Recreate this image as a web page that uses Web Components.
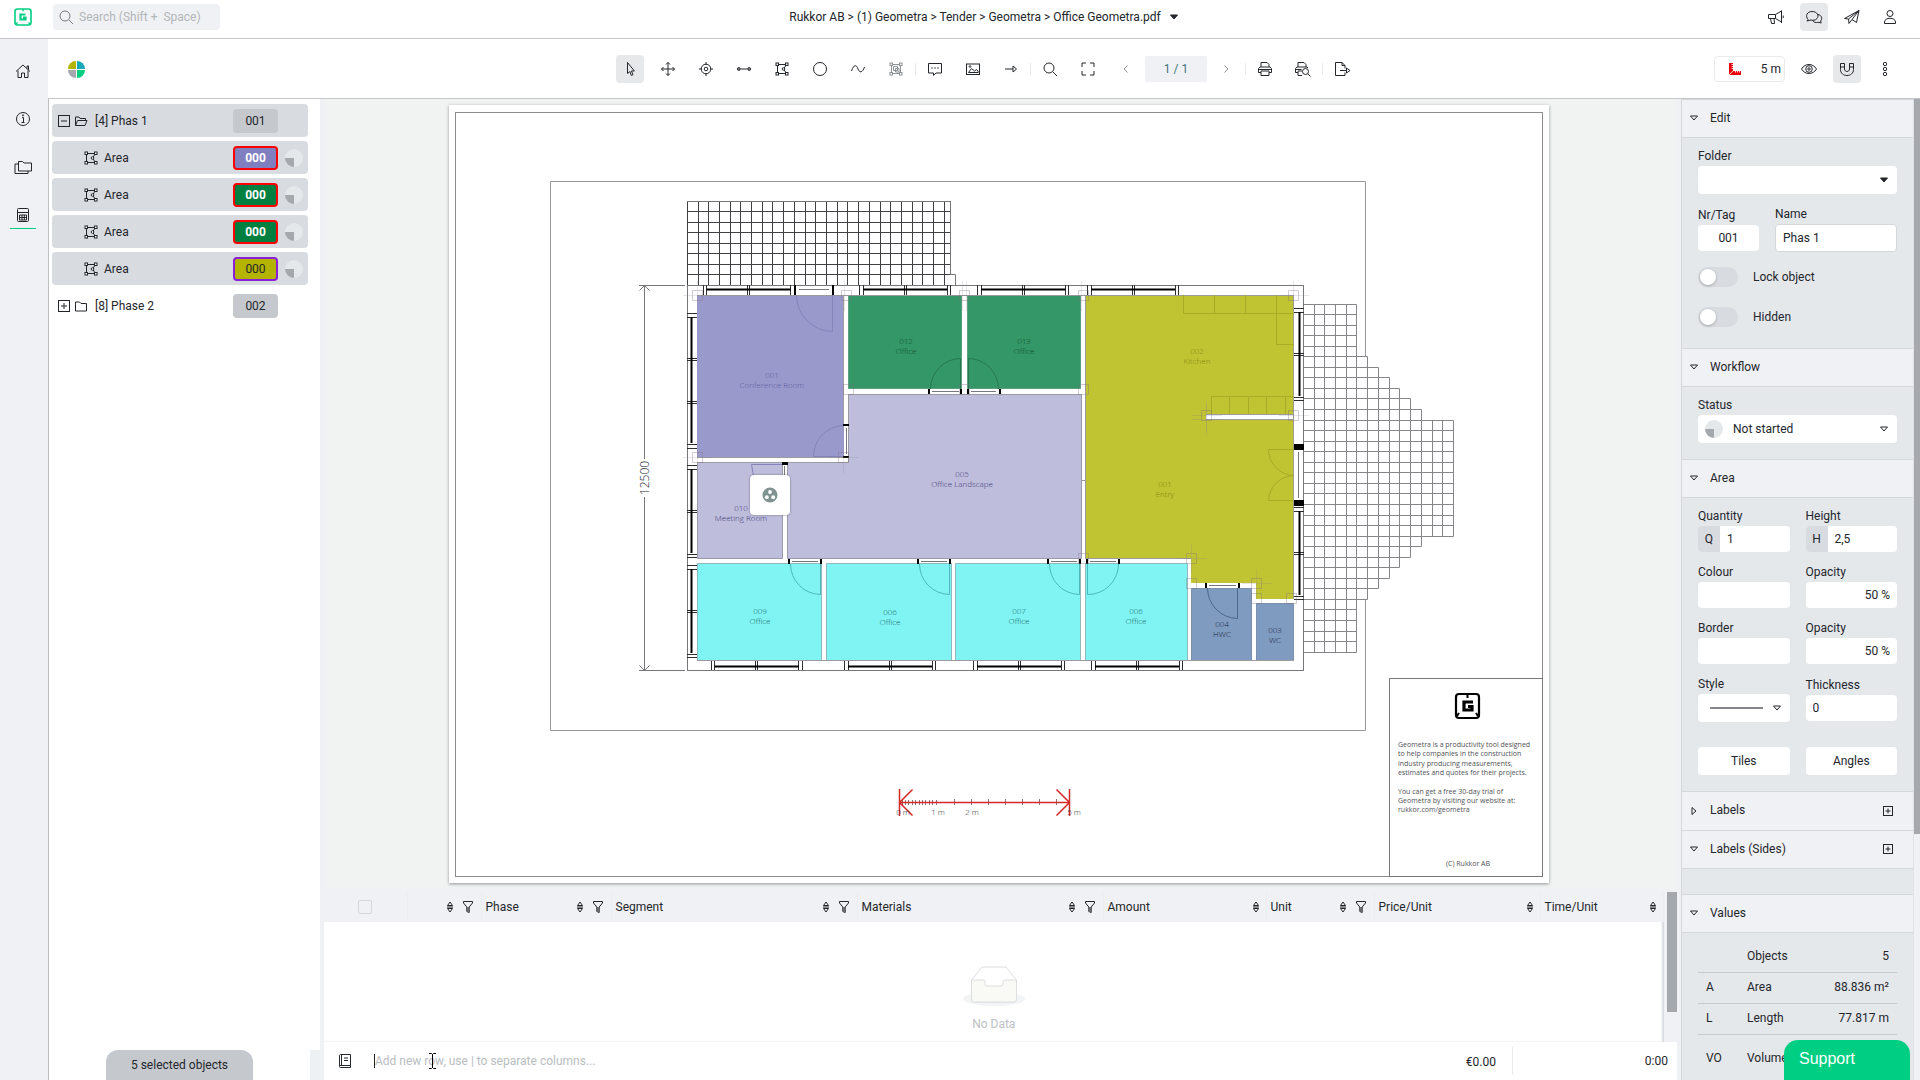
<!DOCTYPE html>
<html lang="en">
<head>
<meta charset="utf-8">
<title>Office Geometra.pdf</title>
<style>
  html, body { margin: 0; height: 100%; }
  body { font: 12px/16px Roboto, "Liberation Sans", sans-serif; color: #23262b; background: #f0f1f4; overflow: hidden; }
</style>
</head>
<body>
<geo-app></geo-app>
<script>
const BASE = `*{box-sizing:border-box}button,input,select{font:inherit;color:inherit;margin:0;border:0;padding:0;background:none;outline:0}button{cursor:pointer}`;
function define(name, css, html, after) {
  customElements.define(name, class extends HTMLElement {
    connectedCallback() {
      if (this.shadowRoot) return;
      const root = this.attachShadow({ mode: 'open' });
      root.innerHTML = `<style>${BASE}${css}</style>${typeof html === 'function' ? html(this) : html}`;
      if (after) after(this, root);
    }
  });
}

const AREA = '<path d="M4.5 4.5h9M4.500 13.500h9M4.500 4.500v9M13.500 4.500l-3 4.500 3 4.500"/><rect x="3" y="3" width="2.500" height="2.500" class="w"/><rect x="12.500" y="3" width="2.500" height="2.500" class="w"/><rect x="3" y="12.500" width="2.500" height="2.500" class="w"/><rect x="12.500" y="12.500" width="2.500" height="2.500" class="w"/><circle cx="10.500" cy="9" r="1.300" class="w"/>';
const ICONS = {
  home: '<path d="M2 9.500L9 3l7 6.500M13 6.500V4h1.500v4M4 8.500V15.500h3.500V11h3v4.500H14V8.500"/>',
  info: '<circle cx="9" cy="9" r="6.500"/><path d="M8 7.500h1.500v5M7.500 12.500h3"/><circle cx="9" cy="5.300" r=".6"/>',
  folders: '<path d="M4.500 3.500h4l1.500 1.500h7.500v8h-13zM4.500 6H1v9.500h13V13"/>',
  calc: '<rect x="3.500" y="2.500" width="11" height="13" rx="1"/><path d="M3.500 6.500h11M5.500 9h7v5h-7zM5.500 11.500h7M8 9v5M10.300 9v5"/>',
  search: '<circle cx="8" cy="8" r="5"/><path d="M11.700 11.700L16 16"/>',
  horn: '<path d="M1.500 6.500h7l6-3.500v11l-6-3.500h-7zM3.500 10.500l1 5h3l-.5-5M8.500 6.500v4M14.500 2.500v12.500M16.200 7.500v2.500"/>',
  chat: '<path d="M3 11.500C0 8 2 3.500 7 3.500s7.500 4 5 7c-1.500 2-4.500 2-6 1.500L2 13z"/><path d="M12.800 6.500c4 .5 5 4.500 2.700 6.500l.7 2-3-.7c-2.500.7-4.700 0-5.700-2"/>',
  send: '<path d="M1.500 10.500L16 2.500l-2.500 12-4.500-3-3 4-.5-4.500zM5.500 11L16 2.500 9 11.500"/>',
  user: '<circle cx="9" cy="5.500" r="3"/><path d="M3.500 15.500v-1.500c0-5 11-5 11 0v1.500z"/>',
  cursor: '<path d="M6.500 2.500v11l2.300-2 1.500 4 1.700-.8-1.600-3.700h3z"/>',
  move: '<path d="M9 2.500v13M2.500 9h13M7 4.500l2-2 2 2M7 13.500l2 2 2-2M4.500 7l-2 2 2 2M13.500 7l2 2-2 2"/>',
  target: '<circle cx="9" cy="9" r="4.800"/><circle cx="9" cy="9" r="1.800"/><path d="M9 2v3M9 13v3M2 9h3M13 9h3"/>',
  length: '<path d="M5.500 9h7"/><path d="M4 7.500v3M14 7.500v3"/><circle cx="3.800" cy="9" r="1.400"/><circle cx="14.200" cy="9" r="1.400"/>',
  area: AREA,
  circle: '<circle cx="9" cy="9" r="6.500"/>',
  curve: '<path d="M2.500 11C5 3.500 7.500 5 9 9s4.500 4 6.500-2"/>',
  group: AREA.replace('M13.500 4.500l-3 4.500 3 4.500', 'M13.500 4.500v9M6.500 6.500h4v4h-4zM8.500 8.500h3.500v3.500h-3.500z').replace(/<circle.*/, ''),
  comment: '<path d="M2.500 3.500h13v9.500h-5.500l-2.500 2.500V13h-5z"/><path d="M5.500 8h1M8.500 8h1M11.500 8h1" stroke-width="1.400"/>',
  image: '<rect x="2.500" y="4" width="13" height="10.500"/><path d="M4.500 12.500l3-4 3 2.500 2-1.500 2 2.500M4.500 12.500h10"/><circle cx="6" cy="6.500" r=".8"/>',
  arrow: '<path d="M3 9h8M11 6l3.500 3-3.500 3z"/>',
  full: '<path d="M3 7V3h4M11 3h4v4M15 11v4h-4M7 15H3v-4"/>',
  prev: '<path d="M10.500 5.500L7 9l3.500 3.500"/>',
  next: '<path d="M7.500 5.500L11 9l-3.500 3.500"/>',
  print: '<path d="M5 7V2.500h6l2 2V7M5 12.500H2.500v-4L4 7h10l1.500 1.500v4H13M5 11h8v4.500H5zM2.500 9.500h13"/>',
  preview: '<path d="M4 7V2.500h6l2 2V7M4 12.500H1.500v-4L3 7h10l1 1M8 15.500H4V11h4"/><circle cx="11.500" cy="11.500" r="3"/><path d="M13.700 13.700l2.800 2.800M1.500 9.500h6"/>',
  exportdoc: '<path d="M12 12.500v3H2.500v-13h6.500l3 3v3M9 2.500v3h3M7 10.500h7M13.500 8l3.500 2.500-3.500 2.500z"/>',
  eye: '<path d="M1.500 9c3.500-6 11.500-6 15 0-3.500 6-11.500 6-15 0z"/><circle cx="9" cy="9" r="3.300"/><circle cx="9" cy="9" r="1.200"/>',
  magnet: '<path d="M2.500 3.500h4V9c0 3.300 5 3.300 5 0V3.500h4V9.500c0 8-13 8-13 0zM2.500 7h4M11.500 7h4"/>',
  dots: '<circle cx="9" cy="4" r="1.700"/><circle cx="9" cy="9" r="1.700"/><circle cx="9" cy="14" r="1.700"/>',
  minus: '<rect x="3.500" y="3.500" width="11" height="11"/><path d="M6 9h6"/>',
  plus: '<rect x="3.500" y="3.500" width="11" height="11"/><path d="M6 9h6M9 6v6"/>',
  add: '<rect x="4.500" y="4.500" width="9" height="9"/><path d="M6.500 9h5M9 6.500v5"/>',
  folder: '<path d="M2.500 5h4l1.500 1.500h5.500v7.500h-11z"/>',
  open: '<path d="M2.500 13.500V5h3.500l1 1.500h5.500v2M2.500 13.500l2-5h9.500l-2 5z"/>',
  sort: '<path d="M9 4l2.500 3.500h-5zM9 14l2.500-3.500h-5zM6 9h6"/>',
  filter: '<path d="M4.500 3.500h9v1.500l-3.300 4v5.500l-2.400-1V9L4.500 5z"/><path d="M8.500 9v4M9.500 9v4.500" opacity=".5"/>',
  down: '<path d="M5.500 7h7L9 11z"/>',
  right: '<path d="M7 5.500l4 3.500-4 3.500z"/>',
  caret: '<path d="M5.500 7h7L9 11z" fill="currentColor"/>',
  book: '<path d="M3.500 3.500v11c0 .8.500 1 1 1h10V2.500h-10c-.6 0-1 .3-1 1M3.500 13.500h11M5.500 2.500v11M8 6h4M8 8.500h4"/>',
  ruler: '<path d="M3 3h4v8h8v4H3z" fill="#e8000d" stroke="none"/><path d="M7 4.500H5.500M7 6.500H5.500M7 8.500H5.500M9.500 11v1.500M11.500 11v1.500M13.500 11v1.500M3 15l4-4" stroke="#fff" stroke-width=".8"/>',
};
define('geo-icon', `:host{display:inline-block;width:18px;height:18px;flex:none}svg{display:block;width:100%;height:100%;fill:none;stroke:currentColor;stroke-width:1;overflow:visible}.w{fill:#fff}`,
  el => `<svg viewBox="0 0 18 18" aria-hidden="true">${ICONS[el.getAttribute('name')]}</svg>`);

define('geo-mark', `:host{display:block;width:18px;height:18px;flex:none;color:#00cf83}svg{display:block;width:100%;height:100%}`,
  `<svg viewBox="0 0 18 18" fill="none" stroke="currentColor"><rect x="1" y="1" width="16" height="16" rx="2.500" stroke-width="1.600"/><path d="M11.500 6.500H6.500v5h5V9.500H9" stroke-width="2.200"/><path d="M9 1v2.200M3.500 14.500l-1.500 1.500M14.500 14.500l1.500 1.500" stroke-width="1.400"/></svg>`);

define('geo-pie', `:host{display:block;width:18px;height:18px;flex:none;--c:#a5a9ae}div{height:100%;border-radius:50%;background:conic-gradient(#e5e8eb 50%,var(--c) 0 75%,#e5e8eb 0)}`, `<div></div>`);

define('geo-button', `:host{display:block;flex:none}button{display:grid;place-items:center;width:28px;height:28px;border-radius:4px}:host([active]) button{background:#e6e8ea}:host([muted]) button{color:#8d9095}`,
  el => `<button type="button" aria-label="${el.getAttribute('icon')}"><geo-icon name="${el.getAttribute('icon')}"></geo-icon></button>`);

define('geo-header', `:host{display:flex;align-items:center;height:39px;background:#fff;border-bottom:1px solid #c4c5c9;padding:0 16px 4px 14px}
  .search{display:flex;align-items:center;gap:4px;margin-left:21px;width:167px;height:26px;border-radius:4px;background:#f0f1f4;padding:0 5px 1px 4px;color:#777a7f}
  input{flex:1;min-width:0}input::placeholder{color:#b3b6b9;opacity:1}
  .path{flex:1;display:flex;justify-content:center;padding-right:10px}.path button{display:flex;align-items:center;gap:4px}
  nav{display:flex;gap:10px}`,
  `<geo-mark></geo-mark>
  <label class="search"><geo-icon name="search"></geo-icon><input type="search" aria-label="Search" placeholder="Search (Shift +  Space)"></label>
  <div class="path"><button type="button">Rukkor AB &gt; (1) Geometra &gt; Tender &gt; Geometra &gt; Office Geometra.pdf<geo-icon name="caret"></geo-icon></button></div>
  <nav><geo-button icon="horn"></geo-button><geo-button icon="chat" active></geo-button><geo-button icon="send"></geo-button><geo-button icon="user"></geo-button></nav>`);

define('geo-rail', `:host{display:flex;flex-direction:column;align-items:center;width:48px;background:#f0f1f4;padding:18px 2px 0 0;gap:20px}
  a{display:grid;place-items:center;width:26px;height:28px;color:inherit;border-bottom:1px solid transparent}a.on{border-color:#00cf83}`,
  `<a href="#home" aria-label="Home"><geo-icon name="home"></geo-icon></a><a href="#info" aria-label="Info"><geo-icon name="info"></geo-icon></a><a href="#files" aria-label="Files"><geo-icon name="folders"></geo-icon></a><a href="#calc" class="on" aria-label="Calculation"><geo-icon name="calc"></geo-icon></a>`);

const btns = s => s.split(' ').map(n => `<geo-button icon="${n.replace(/[*~]/, '')}"${n.includes('*') ? ' active' : ''}${n.includes('~') ? ' muted' : ''}></geo-button>`).join('');
define('geo-toolbar', `:host{display:grid;grid-template-columns:1fr auto 1fr;align-items:center;height:60px;background:#fff;border-bottom:1px solid #c4c5c9;padding:1px 16px 0 20px}
  .mid{display:flex;gap:5px;align-items:center}.g{display:flex;gap:10px}.pg{display:flex;gap:5px;align-items:center}hr{width:1px;height:12px;margin:0;border:0;background:#e6e8ea}
  .page{width:62px;height:26px;background:#f0f1f4;border-radius:2px;text-align:center;color:#43757a}
  .end{display:flex;gap:10px;justify-content:flex-end;align-items:center;padding-right:5px}
  .scale{display:flex;align-items:center;justify-content:space-between;width:71px;height:26px;border:1px solid #e8eaec;border-radius:4px;padding:0 3px 0 11px}
  .pie{display:block;width:17px;height:17px}`,
  `<svg class="pie" viewBox="0 0 18 18"><path d="M8.500 8.500H0A8.500 8.500 0 0 1 8.500 0z" fill="#b4b400"/><path d="M9.500 8.500V0A8.500 8.500 0 0 1 18 8.500z" fill="#18a9b8"/><path d="M8.500 9.500V18A8.500 8.500 0 0 1 0 9.500z" fill="#a5a9ae"/><path d="M9.500 9.500H18A8.500 8.500 0 0 1 9.500 18z" fill="#00cf83"/></svg>
  <div class="mid"><div class="g">${btns('cursor* move target length area circle curve group~')}</div><hr>
  <div class="g">${btns('comment image arrow')}</div><hr>
  <div class="g">${btns('search full')}<div class="pg">${btns('prev~')}<input class="page" aria-label="Page" value="1 / 1">${btns('next~')}</div></div><hr>
  <div class="g">${btns('print preview')}</div><hr><div class="g">${btns('exportdoc')}</div></div>
  <div class="end"><button type="button" class="scale"><geo-icon name="ruler"></geo-icon>5 m</button>${btns('eye magnet* dots')}</div>`);

define('geo-tree-row', `:host{display:flex;align-items:center;height:33px;border-radius:4px;padding:1px 5px 0 3px}
  :host([selected]){background:#d8dbe0}.name{flex:1;padding-left:4px}:host([child]){padding-left:30px}
  .tag{width:45px;height:24px;margin-right:7px;border-radius:4px;background:var(--fill,#c5c9cd);border:2px solid var(--line,transparent);background-clip:border-box;text-align:center;line-height:20px;color:var(--ink,inherit);font-weight:var(--weight,400)}
  .end{width:18px}button{display:grid}`,
  el => {
    const child = el.hasAttribute('child');
    return `${child ? '<geo-icon name="area"></geo-icon>' : `<button type="button" aria-label="Toggle"><geo-icon name="${el.getAttribute('toggle')}"></geo-icon></button><geo-icon name="${el.getAttribute('toggle') === 'minus' ? 'open' : 'folder'}"></geo-icon>`}
    <span class="name"><slot></slot></span><span class="tag">${el.getAttribute('tag')}</span><span class="end">${child ? '<geo-pie></geo-pie>' : ''}</span>`;
  });

define('geo-tree', `:host{display:flex;flex-direction:column;width:272px;background:#fff;border-left:1px solid #bdbfc3}
  .rows{flex:1;display:flex;flex-direction:column;gap:4px;padding:5px 12px 0 3px}
  geo-tree-row{flex:none}
  .violet{--fill:#8080c0;--line:#f00;--ink:#fff;--weight:700}.green{--fill:#008040;--line:#f00;--ink:#fff;--weight:700}.olive{--fill:#b4b400;--line:#8a1fd8}
  footer{display:flex;justify-content:center;height:30px;border-right:10px solid #eef1f4}
  footer span{width:147px;border-radius:12px 12px 0 0;background:#c5c9cd;text-align:center;line-height:30px}`,
  `<div class="rows"><geo-tree-row selected toggle="minus" tag="001">[4] Phas 1</geo-tree-row>
  <geo-tree-row selected child class="violet" tag="000">Area</geo-tree-row><geo-tree-row selected child class="green" tag="000">Area</geo-tree-row>
  <geo-tree-row selected child class="green" tag="000">Area</geo-tree-row><geo-tree-row selected child class="olive" tag="000">Area</geo-tree-row>
  <geo-tree-row toggle="plus" tag="002">[8] Phase 2</geo-tree-row></div><footer><span>5 selected objects</span></footer>`);

/* Floor plan drawing, in sheet units */
function plan() {
  const line = (x1, y1, x2, y2) => `M${x1} ${y1}L${x2} ${y2}`;
  const rect = (x, y, x2, y2, f, s = 'none') => `<rect x="${x}" y="${y}" width="${x2 - x}" height="${y2 - y}" fill="${f}" stroke="${s}"/>`;
  const path = (d, s, w = 1) => `<path d="${d}" stroke="${s}" stroke-width="${w}"/>`;
  const snap = v => Math.floor(v) + .5;
  let g1 = '', g2 = '', win = '', bars = '', posts = '', thin = '';
  for (let i = 0; i < 25; i++) g1 += line(snap(687.3 + i * 10.71), 201, snap(687.3 + i * 10.71), 285);
  for (let j = 0; j < 8; j++) g1 += line(687, snap(201 + j * 10.55), 951, snap(201 + j * 10.55));
  const reach = [];
  for (let j = 0; j < 33; j++) reach.push(j < 5 ? 5 : j < 11 ? j + 1 : j < 22 ? 14 : j < 28 ? 33 - j : 5);
  const gx = k => snap(1303.3 + 10.73 * k), gy = j => snap(304 + 10.55 * j);
  for (let j = 0; j <= 33; j++) g2 += line(1303, gy(j), gx(Math.max(reach[j] || 0, reach[j - 1] || 0)), gy(j));
  for (let k = 1; k <= 14; k++) { const a = reach.findIndex(r => r >= k), b = 33 - [...reach].reverse().findIndex(r => r >= k); g2 += line(gx(k), gy(a), gx(k), gy(b)); }
  const hw = (x, y1, y2, yc, n = 2) => { bars += line(x, yc, x + 42 * n, yc); [-3.5, 0].forEach(o => win += line(snap(x + o), y1, snap(x + o), y2)); for (let i = 1; i < n; i++) [-1, 1].forEach(o => win += line(snap(x + 42 * i) + o, y1, snap(x + 42 * i) + o, y2)); [0, 3.5].forEach(o => win += line(snap(x + 42 * n + o), y1, snap(x + 42 * n + o), y2)); };
  const vw = (y, x1, x2, xc, n = 2) => { bars += line(xc, y, xc, y + 42 * n); [-3.5, 0].forEach(o => win += line(x1, snap(y + o), x2, snap(y + o))); for (let i = 1; i < n; i++) [-1, 1].forEach(o => win += line(x1, snap(y + 42.5 * i) + o, x2, snap(y + 42.5 * i) + o)); [0, 3.5].forEach(o => win += line(x1, snap(y + 42.5 * n + o), x2, snap(y + 42.5 * n + o))); };
  [706.7, 863.3, 981.3, 1091].forEach(x => hw(x, 285, 295, 289.5));
  [714.7, 848, 977, 1095].forEach(x => hw(x, 661, 670, 666.5));
  vw(317, 687, 697, 691.5, 3); [469, 569].forEach(y => vw(y, 687, 697, 691.5)); [312, 511].forEach(y => vw(y, 1294, 1304, 1299.5));
  [[794, 285, 2, 10], [832, 285, 2, 10], [843, 424, 6, 2], [843, 456, 6, 2], [928, 389, 2, 5], [960, 389, 2, 5], [967, 389, 2, 5], [999, 389, 2, 5], [782, 462, 6, 3],
   [788, 559, 2, 5], [820, 559, 2, 5], [917, 559, 2, 5], [949, 559, 2, 5], [1047, 559, 2, 5], [1079, 559, 2, 5], [1086, 559, 2, 5], [1118, 559, 2, 5], [1205, 583, 2, 5], [1238, 583, 2, 5], [1294, 444, 10, 6], [1294, 500, 10, 6]]
    .forEach(([x, y, w, h]) => posts += `<rect x="${x}" y="${y}" width="${w}" height="${h}"/>`);
  [[799, 289.5, 829, 289.5], [846.5, 428, 846.5, 454], [932, 391.5, 959, 391.5], [971, 391.5, 996, 391.5], [792, 561.5, 818, 561.5], [921, 561.5, 947, 561.5], [1051, 561.5, 1077, 561.5], [1090, 561.5, 1116, 561.5], [1209, 585.5, 1236, 585.5], [1298.5, 452, 1298.5, 498], [784.5, 466, 784.5, 476]].forEach(a => thin += line(...a));
  let marks = '';
  [[697, 295], [846, 295], [964, 295], [1083, 295], [1293, 295], [697, 457], [843, 457], [1206, 415], [1293, 415], [1083, 558], [1191, 558], [1191, 583], [1256, 583], [1256, 598], [1291, 598], [848, 389], [964, 389], [1083, 389]]
    .forEach(([x, y]) => marks += `M${x - 4.5} ${y - 4.5}h10v10h-10z`);
  let cross = '';
  [[697, 295], [844, 295], [962, 295], [966, 295], [1081, 295], [1293, 295], [697, 457], [843, 457], [1206, 415], [1206, 419], [1293, 415], [1191, 558], [1256, 583]].forEach(([x, y]) => cross += `M${x - 14} ${y + .5}h30M${x + .5} ${y - 14}v30`);
  const label = (x, y, a, b, c) => `<text x="${x}" y="${y}" fill="${c}"><tspan>${a}</tspan><tspan x="${x}" dy="10">${b}</tspan></text>`;
  const note = [['Geometra is a productivity tool designed', 747], ['to help companies in the construction', 756], ['industry producing measurements,', 766], ['estimates and quotes for their projects.', 775], ['You can get a free 30-day trial of', 794], ['Geometra by visiting our website at:', 803], ['rukkor.com/geometra', 812]];
  let ticks = '';
  for (let i = 0; i <= 10; i++) ticks += line(snap(902 + i * 3.4), 800, snap(902 + i * 3.4), 805);
  [954, 971, 988, 1005, 1022, 1039, 1056].forEach(x => ticks += line(x + .5, 799, x + .5, 805));
  return `<svg viewBox="449 105 1100 778" fill="none" role="img" aria-label="Floor plan">
  ${rect(455.5, 112.5, 1542.5, 876.5, 'none', '#8b8c8e')}
  ${path('M1365.500 357V181.500H550.500V730.500H1365.500V599', '#97989a')}
  ${path(g1, '#3f4144')}${path('M687 201.500H950.500V274.500H955.500V285', '#777')}
  ${path(g2, '#85868a')}
  ${rect(687.5, 285.5, 1303.5, 670.500, '#fff', '#77787b')}
  <g stroke="#9a9ba6" stroke-width="1">
  ${path('M843.500 457.500H697.500V295.500H843.500', '#7f7fb0')}
  <rect x="697" y="295" width="147" height="162" fill="#9a99cc" stroke="none"/>
  <path d="M848.500 295.500H961.500V388.500H848.500z" fill="#349767" stroke="#5b9f80"/><path d="M967.500 295.500H1080.500V388.500H967.500z" fill="#349767" stroke="#5b9f80"/>
  <path d="M848.500 394.500H1081.500V558.500H787.500V462.500H848.500z" fill="#bfbddc"/><path d="M697.500 462.500H782.500V558.500H697.500z" fill="#bfbddc"/>
  <path d="M697.500 563.500H821.500V660.500H697.500zM826.500 563.500H951.500V660.500H826.500zM955.500 563.500H1080.500V660.500H955.500zM1085.500 563.500H1187.500V660.500H1085.500z" fill="#80f4f2" stroke="#8fb9bd"/>
  <path d="M1191.500 588.500H1251.500V660.500H1191.500zM1256.500 603.500H1293.500V660.500H1256.500z" fill="#7f9bbf" stroke="#7c8fae"/></g>
  <path d="M1085 295H1294V599H1256V583H1191V558H1085z" fill="#c0c332"/>
  ${rect(1206, 415, 1294, 419, '#fff')}
  ${path('M843.500 295v128M848.500 394V423M697 457.500H843M1085.500 295V558M1294 295.500H697M697 660.500H1294M1293.500 295V599M1081 480.500H1085M1085 558.500H1191M1206 414.500H1294M1206 419.500H1294', '#9c9c9f')}
  ${path('M832.500 295V331.500A36.500 36.500 0 0 1 796.500 295M843 456.500H813.500A31 31 0 0 1 843 425.500M751.500 464.500H782M751.500 464.500L753.500 476', '#8584b8')}
  ${path('M960.500 389V358.500A30.500 30.500 0 0 0 930.500 389M968.500 389V358.500A30.500 30.500 0 0 1 998.500 389', '#26784f')}
  ${path('M820.500 564V594.500A30.500 30.500 0 0 1 790.500 564M949.500 564V594.500A30.500 30.500 0 0 1 919.500 564M1079.500 564V594.500A30.500 30.500 0 0 1 1049.500 564M1087.500 564V594.500A30.500 30.500 0 0 0 1118.500 564', '#4db9ba')}
  ${path('M1237.500 588V618.500A30.500 30.500 0 0 1 1207.500 588', '#4c6789')}
  ${path('M1294 449.500H1268.500A26 26 0 0 0 1294 475.500A26 26 0 0 0 1268.500 500.500H1294M1183.500 295V313.500H1294M1214.500 295V313M1245.500 295V313M1276.500 295V344.500H1294M1211.500 414V396.500H1294M1229.500 396V414M1248.500 396V414M1266.500 396V414M1285.500 396V414', '#a8ab26')}
  ${path(win, '#2d2e30')}${path(bars, '#000', 2)}${path(thin, '#77787b')}<g fill="#000">${posts}</g>
  ${path(marks, 'rgba(130,110,130,.35)')}${path(cross, 'rgba(130,130,140,.2)')}
  ${path('M639 285.500H685M639 670.500H685M644.500 286V459M644.500 497V670M639.500 290.500L644.500 285.500L649.500 290.500M639.500 665.500L644.500 670.500L649.500 665.500', '#77787b')}
  <text class="dim" transform="translate(649 478) rotate(-90)">12500</text>
  <g class="room">${label(772, 378, '001', 'Conference Room', '#605f9a')}${label(906, 344, '012', 'Office', '#0d4f2e')}${label(1024, 344, '013', 'Office', '#0d4f2e')}
  ${label(962, 477, '005', 'Office Landscape', '#3d3c72')}${label(741, 511, '010', 'Meeting Room', '#3d3c72')}${label(1197, 354, '002', 'Kitchen', '#85880f')}${label(1165, 487, '001', 'Entry', '#85880f')}
  ${label(760, 614, '009', 'Office', '#14696c')}${label(890, 615, '006', 'Office', '#14696c')}${label(1019, 614, '007', 'Office', '#14696c')}${label(1136, 614, '006', 'Office', '#14696c')}
  ${label(1222, 627, '004', 'HWC', '#182a48')}${label(1275, 633, '003', 'WC', '#182a48')}</g>
  <rect class="pop" x="750" y="475" width="40" height="40" rx="4"/><circle cx="770" cy="495" r="7.500" fill="#7f9491"/><g fill="#fff"><circle cx="770" cy="492" r="1.900"/><circle cx="766.800" cy="497.200" r="1.900"/><circle cx="773.200" cy="497.200" r="1.900"/></g>
  ${path(ticks, '#8a7474')}${path('M899 802.500H1069M899.500 789V816M1069.500 789V816M912.500 789.500L899.500 802.500L912.500 815.500M1056.500 789.500L1069.500 802.500L1056.500 815.500', '#d32a26', 1.500)}
  <g class="room" fill="#26282c"><text x="903" y="815">0 m</text><text x="938" y="815">1 m</text><text x="972" y="815">2 m</text><text x="1074" y="815">5 m</text></g>
  ${rect(1389.5, 678.5, 1542.5, 876.5, '#fff', '#77787b')}
  <g stroke="#000"><rect x="1456" y="694" width="23" height="24" rx="3" stroke-width="2.200"/><path d="M1473 702H1464v8h8v-3.500H1468" stroke-width="3.200"/><path d="M1467.500 694v4M1459 713l-2 3M1476 713l2 3" stroke-width="2"/></g>
  <g class="note">${note.map(([t, y]) => `<text x="1398" y="${y}">${t}</text>`).join('')}<text x="1468" y="866" text-anchor="middle">(C) Rukkor AB</text></g></svg>`;
}
define('geo-plan', `:host{display:flex;justify-content:center;align-items:flex-start;flex:1;min-height:0;background:#f1f3f3;padding:6px 4px 0 0;border:solid #f0f1f4;border-width:0 5px;overflow:hidden}
  svg{display:block;width:1100px;max-width:100%;flex:none;background:#fff;box-shadow:0 1px 3px rgba(80,85,90,.6)}
  text{font-family:"Open Sans","Noto Sans",sans-serif;font-weight:400}
  .room text{font-size:8px;text-anchor:middle;font-weight:300}.dim{font-size:12px;text-anchor:middle;fill:#26282c;font-weight:300}.note text{font-size:7px;fill:#505257;font-weight:400}
  .pop{fill:#fff;filter:drop-shadow(0 0 1px rgba(60,60,90,.6))}`, plan);

const SORT = '<geo-icon name="sort"></geo-icon>', FILT = '<geo-icon name="filter"></geo-icon>';
define('geo-grid', `:host{display:block;flex:none}
  .wrap{display:flex;height:150px;background:#f0f1f4}.view{flex:1;min-width:0;background:#fff;box-shadow:inset -2px 0 2px #d8dbe0;display:flex;flex-direction:column}
  table{width:100%;border-collapse:collapse;table-layout:fixed}th{height:30px;padding:0;font-weight:400;text-align:left;background:#f0f1f4;border-right:1px solid #ecedf0}
  .c{display:flex;align-items:center;padding:0 1px 0 4px}.c span{flex:1}.f{padding-right:4px}
  input[type=checkbox]{appearance:none;display:block;width:14px;height:14px;margin-left:34px;border:1px solid #d5d7da;border-radius:2px}
  td{padding:44px 0 0;text-align:center;color:#bdc1c3}td svg{display:block;margin:0 auto 9px}
  .bar{width:10px;margin-left:3px;background:#f0f1f4}.bar i{display:block;height:120px;background:#a5a9ae}
  footer{display:flex;align-items:center;height:38px;background:#fff;padding:0 9px 1px 12px}
  footer label{display:flex;flex:1;align-items:center;gap:20px}footer input{flex:1;border-left:1px solid #222;height:14px;line-height:14px}footer input::placeholder{color:#b9bdbf;opacity:1}
  .edit{display:grid;flex:1;align-items:center}.edit>*{grid-area:1/1}.edit svg{margin-left:54px}
  .sum{padding-right:16px;height:28px;line-height:30px;border-right:1px solid #e8eaec;text-align:right;box-sizing:content-box;width:60px}.time{width:155px;text-align:right;line-height:30px}`,
  `<div class="wrap"><div class="view"><table><colgroup><col style="width:83px"><col style="width:74px"><col style="width:130px"><col style="width:246px"><col style="width:246px"><col style="width:163px"><col style="width:108px"><col style="width:166px"><col></colgroup>
  <thead><tr><th><input type="checkbox" aria-label="Select all"></th><th><div class="c f"><span></span>${SORT}${FILT}</div></th><th><div class="c f"><span>Phase</span>${SORT}${FILT}</div></th><th><div class="c f"><span>Segment</span>${SORT}${FILT}</div></th><th><div class="c f"><span>Materials</span>${SORT}${FILT}</div></th><th><div class="c"><span>Amount</span>${SORT}</div></th><th><div class="c f"><span>Unit</span>${SORT}${FILT}</div></th><th><div class="c"><span>Price/Unit</span>${SORT}</div></th><th><div class="c"><span>Time/Unit</span>${SORT}</div></th></tr></thead>
  <tbody><tr><td colspan="9"><svg width="64" height="41" viewBox="0 0 64 41"><ellipse cx="32" cy="33" rx="31" ry="7" fill="#f3f4f5"/><path d="M20 1h24l10.500 13v19c0 2-1 3-3 3h-39c-2 0-3-1-3-3V14z" fill="#fff" stroke="#dcdee0"/><path d="M9.500 14H21c2 0 2 1.500 2 3s.5 3 2 3h14c1.500 0 2-1.500 2-3s0-3 2-3h11.500v19c0 2-1 3-3 3h-39c-2 0-3-1-3-3z" fill="#f9faf6" stroke="#dcdee0"/></svg>No Data</td></tr></tbody></table></div><div class="bar"><i></i></div></div>
  <footer><label><geo-icon name="book"></geo-icon><span class="edit"><input type="text" aria-label="New row" placeholder="Add new row, use | to separate columns..."><svg width="9" height="18" viewBox="0 0 9 18" fill="none" stroke="#000"><path d="M1 1.500h2.500l1 1 1-1H8M1 16.500h2.500l1-1 1 1H8M4.500 2v14"/></svg></span></label><span class="sum">€0.00</span><span class="time">0:00</span></footer>`);

define('geo-section', `:host{display:block;flex:none}
  header{display:flex;align-items:center;height:39px;background:#f0f1f4;border:solid #d5d8da;border-width:1px 0;padding:0 16px 2px 3px;gap:7px}
  :host([closed]) header{border-bottom:0}h2{flex:1;margin:0;font:inherit}button{display:grid;padding-top:1px}
  .body{display:flex;flex-direction:column;background:#e5e8eb;padding:10px 16px 16px}:host([closed]) .body{display:none}:host([empty]) .body{padding:0;height:25px}:host([flush]) .body{padding-top:8px}`,
  el => `<header><button type="button" aria-label="Toggle ${el.getAttribute('title-text')}"><geo-icon name="${el.hasAttribute('closed') ? 'right' : 'down'}"></geo-icon></button><h2>${el.getAttribute('title-text')}</h2>${el.hasAttribute('addable') ? '<button type="button" aria-label="Add"><geo-icon name="add"></geo-icon></button>' : ''}</header><div class="body"><slot></slot></div>`);

define('geo-field', `:host{display:flex;flex-direction:column;gap:2px;flex:1;min-width:0}
  .box{display:grid;grid-template-columns:auto 1fr;align-items:center;height:26px;border-radius:4px;background:#fff;overflow:hidden}
  :host([outlined]) .box,:host([select]) .box{height:28px}:host([outlined]) .box{border:1px solid #d5d8da}
  b{display:grid;place-items:center;width:22px;height:26px;background:#d8dbe0;font-weight:400}
  input,select{grid-column:2;grid-row:1;width:100%;min-width:0;height:100%;padding:0 7px;appearance:none;text-align:var(--align,left)}
  select{grid-column:1/3;padding-left:35px}geo-icon{grid-column:2;grid-row:1;justify-self:end;margin-right:4px;pointer-events:none}
  geo-pie{grid-column:1;grid-row:1;margin-left:7px;pointer-events:none}.stroke{grid-column:1;grid-row:1;margin-left:12px;width:53px;height:2px;background:#85878b}`,
  el => {
    const a = n => el.getAttribute(n) || '', kind = el.getAttribute('select');
    return `<label for="f">${a('label')}</label><div class="box">${kind !== null
      ? `<select id="f"><option>${a('value')}</option></select>${kind === 'status' ? '<geo-pie></geo-pie>' : kind === 'line' ? '<span class="stroke"></span>' : ''}<geo-icon name="${kind === 'folder' ? 'caret' : 'down'}"></geo-icon>`
      : `${a('prefix') ? `<b>${a('prefix')}</b>` : ''}<input id="f" type="text" value="${a('value')}">`}</div>`;
  });

define('geo-toggle', `:host{display:block}label{display:flex;align-items:center;gap:15px;height:20px}
  input{appearance:none;width:40px;height:20px;border-radius:10px;background:#d8dbe0;padding:2px}input::before{content:"";display:block;width:16px;height:16px;border-radius:50%;background:#fff;box-shadow:0 1px 3px rgba(0,0,0,.25)}`,
  `<label><input type="checkbox"><span><slot></slot></span></label>`);

define('geo-inspector', `:host{display:flex;width:239px;background:#f0f1f4}
  .list{flex:1;border-left:1px solid #d5d8da;background:#e5e8eb;overflow:hidden;display:flex;flex-direction:column}
  .bar{width:7px;border-left:1px solid #e0e2e5}.bar i{display:block;height:735px;background:#a5a9ae}
  .row{display:flex;gap:16px;align-items:center}.row+.row,.gap{margin-top:12px}.tag{flex:0 0 61px;--align:center}.num{--align:right}
  geo-toggle{margin-top:20px}.first{margin-top:15px}.last{margin-bottom:5px}
  .row.actions{margin-top:25px}.row button{flex:1;height:28px;background:#fff;border-radius:4px}
  table{width:100%;border-collapse:collapse}td{height:31px;padding:0 8px 1px;border-bottom:1px solid #c5c9cd}td:first-child{width:41px}td:nth-child(2){padding-left:8px}td:last-child{text-align:right}.tall td{height:49px}`,
  `<div class="list"><geo-section title-text="Edit"><geo-field label="Folder" select="folder"></geo-field>
  <div class="row gap"><geo-field class="tag" label="Nr/Tag" value="001"></geo-field><geo-field outlined label="Name" value="Phas 1"></geo-field></div>
  <geo-toggle class="first">Lock object</geo-toggle><geo-toggle class="last">Hidden</geo-toggle></geo-section>
  <geo-section title-text="Workflow"><geo-field label="Status" select="status" value="Not started"></geo-field></geo-section>
  <geo-section title-text="Area"><div class="row"><geo-field label="Quantity" prefix="Q" value="1"></geo-field><geo-field label="Height" prefix="H" value="2,5"></geo-field></div>
  <div class="row"><geo-field label="Colour"></geo-field><geo-field class="num" label="Opacity" value="50 %"></geo-field></div>
  <div class="row"><geo-field label="Border"></geo-field><geo-field class="num" label="Opacity" value="50 %"></geo-field></div>
  <div class="row"><geo-field label="Style" select="line"></geo-field><geo-field label="Thickness" value="0"></geo-field></div>
  <div class="row actions"><button type="button">Tiles</button><button type="button">Angles</button></div></geo-section>
  <geo-section title-text="Labels" closed addable></geo-section><geo-section title-text="Labels (Sides)" empty addable></geo-section>
  <geo-section title-text="Values" flush><table><tr><td></td><td>Objects</td><td>5</td></tr><tr><td>A</td><td>Area</td><td>88.836 m²</td></tr><tr><td>L</td><td>Length</td><td>77.817 m</td></tr><tr class="tall"><td>VO</td><td>Volume</td><td></td></tr></table></geo-section></div><div class="bar"><i></i></div>`);

define('geo-support', `:host{display:block;position:fixed;right:10px;bottom:0}button{width:126px;height:40px;padding:0 15px 2px;border-radius:14px 14px 0 0;background:#00cf83;color:#fff;font:16px/20px "Liberation Sans",Arial,sans-serif;text-align:left}`, `<button type="button">Support</button>`);

define('geo-app', `:host{display:flex;flex-direction:column;height:100vh}.under{display:flex;flex:1;min-height:0}.work{flex:1;min-width:0;display:flex;flex-direction:column}.panes{flex:1;min-height:0;display:flex}main{flex:1;min-width:0;display:flex;flex-direction:column}geo-grid{margin:0 4px}geo-plan{margin-bottom:3px}geo-tree,geo-inspector,geo-rail{flex:none}`,
  `<geo-header></geo-header><div class="under"><geo-rail></geo-rail><div class="work"><geo-toolbar></geo-toolbar><div class="panes"><geo-tree></geo-tree><main><geo-plan></geo-plan><geo-grid></geo-grid></main><geo-inspector></geo-inspector></div></div></div><geo-support></geo-support>`);
</script>
</body>
</html>
